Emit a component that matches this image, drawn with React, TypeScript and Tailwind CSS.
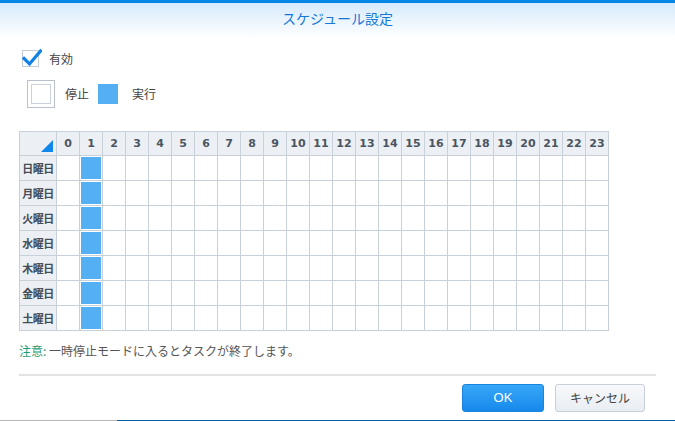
import React, { useState } from "react";

const days = ["日曜日", "月曜日", "火曜日", "水曜日", "木曜日", "金曜日", "土曜日"];
const hours = Array.from({ length: 24 }, (_, i) => i);

const jp = "font-['Noto_Sans_CJK_JP','Noto_Sans',sans-serif]";

export default function App() {
  const [enabled, setEnabled] = useState(true);
  // hour 1 runs every day
  const [active] = useState<boolean[][]>(
    days.map(() => hours.map((h) => h === 1))
  );

  return (
    <div className={`w-[675px] h-[421px] bg-white flex flex-col overflow-hidden ${jp}`}>
      {/* Title bar */}
      <div className="h-[3px] bg-[#0086e6]" />
      <div className="h-[35px] bg-gradient-to-b from-[#d6eafb] to-white flex items-center justify-center">
        <span className="text-[14px] text-[#1677d9] leading-none -mt-[6px]">スケジュール設定</span>
      </div>

      <div className="flex flex-col px-[19px] pt-[12px]">
        {/* Enabled */}
        <label className="flex items-center gap-[10px] h-[17px] ml-[3px]">
          <button
            onClick={() => setEnabled(!enabled)}
            className="w-[17px] h-[17px] border border-[#c3cbd5] bg-white relative"
          >
            {enabled && (
              <svg viewBox="0 0 20 20" className="absolute -left-[1px] -top-[3px] w-[20px] h-[20px]">
                <path d="M2 10.5 L7.5 16 L18.5 3" fill="none" stroke="#1281e6" strokeWidth="3.2" strokeLinecap="square" />
              </svg>
            )}
          </button>
          <span className="text-[12px] text-[#444]">有効</span>
        </label>

        {/* Legend */}
        <div className="flex items-center mt-[13px] ml-[8px] h-[28px]">
          <div className="w-[28px] h-[28px] border border-[#b7c0cb] p-[3px]">
            <div className="w-full h-full border border-[#c9d1db]" />
          </div>
          <span className="text-[12px] text-[#444] ml-[10px]">停止</span>
          <div className="w-[20px] h-[20px] bg-[#55b0f3] ml-[9px]" />
          <span className="text-[12px] text-[#444] ml-[14px]">実行</span>
        </div>

        {/* Schedule grid */}
        <table className="mt-[23px] table-fixed border-collapse w-[590px]">
          <colgroup>
            <col className="w-[37px]" />
            {hours.map((h) => (
              <col key={h} className="w-[23px]" />
            ))}
          </colgroup>
          <thead>
            <tr className="h-[24px]">
              <th className="border border-[#c8d0da] bg-[#ecf0f4] relative p-0 h-[24px]">
                <svg viewBox="0 0 12 12" className="absolute right-[3px] bottom-[3px] w-[12px] h-[12px]">
                  <polygon points="12,0 12,12 0,12" fill="#0f86ea" />
                </svg>
              </th>
              {hours.map((h) => (
                <th
                  key={h}
                  className="border border-[#c8d0da] bg-[#ecf0f4] p-0 h-[24px] text-[11px] leading-none font-bold text-[#4a5562] font-['DejaVu_Sans',sans-serif] text-center"
                >
                  {h}
                </th>
              ))}
            </tr>
          </thead>
          <tbody>
            {days.map((d, r) => (
              <tr key={d} className="h-[24px]">
                <td className="border border-[#c8d0da] bg-[#ecf0f4] p-0 h-[24px] text-[11px] leading-none font-bold text-[#444c57] text-center tracking-[-0.5px]">
                  {d}
                </td>
                {hours.map((h) => (
                  <td key={h} className="border border-[#c8d0da] p-[1px] h-[24px]">
                    {active[r][h] && <div className="w-full h-[22px] bg-[#55b0f3]" />}
                  </td>
                ))}
              </tr>
            ))}
          </tbody>
        </table>

        {/* Note */}
        <p className="mt-[12px] text-[12px] text-[#555] leading-[16px]">
          <span className="text-[#1b9e77]">注意:</span>&nbsp;一時停止モードに入るとタスクが終了します。
        </p>

        {/* Separator */}
        <div className="mt-[15px] w-[637px] h-[2px] bg-[#e3e3e3]" />

        {/* Buttons */}
        <div className="flex justify-end gap-[11px] mt-[8px] pr-[11px]">
          <button className="w-[82px] h-[28px] rounded-[3px] bg-gradient-to-b from-[#37a7f8] to-[#1589eb] border border-[#1a83dd] text-white text-[13px] font-['Liberation_Sans',sans-serif]">
            OK
          </button>
          <button className="w-[90px] h-[28px] rounded-[3px] bg-gradient-to-b from-[#f7f9fb] to-[#e9eef3] border border-[#c7cfd8] text-[#444] text-[12px]">
            キャンセル
          </button>
        </div>
      </div>

      <div className="flex-1" />
      {/* bottom progress strip */}
      <div className="flex h-[1px]">
        <div className="w-[117px] bg-[#b5b5b5]" />
        <div className="flex-1 bg-[#0b5fa3]" />
      </div>
    </div>
  );
}
